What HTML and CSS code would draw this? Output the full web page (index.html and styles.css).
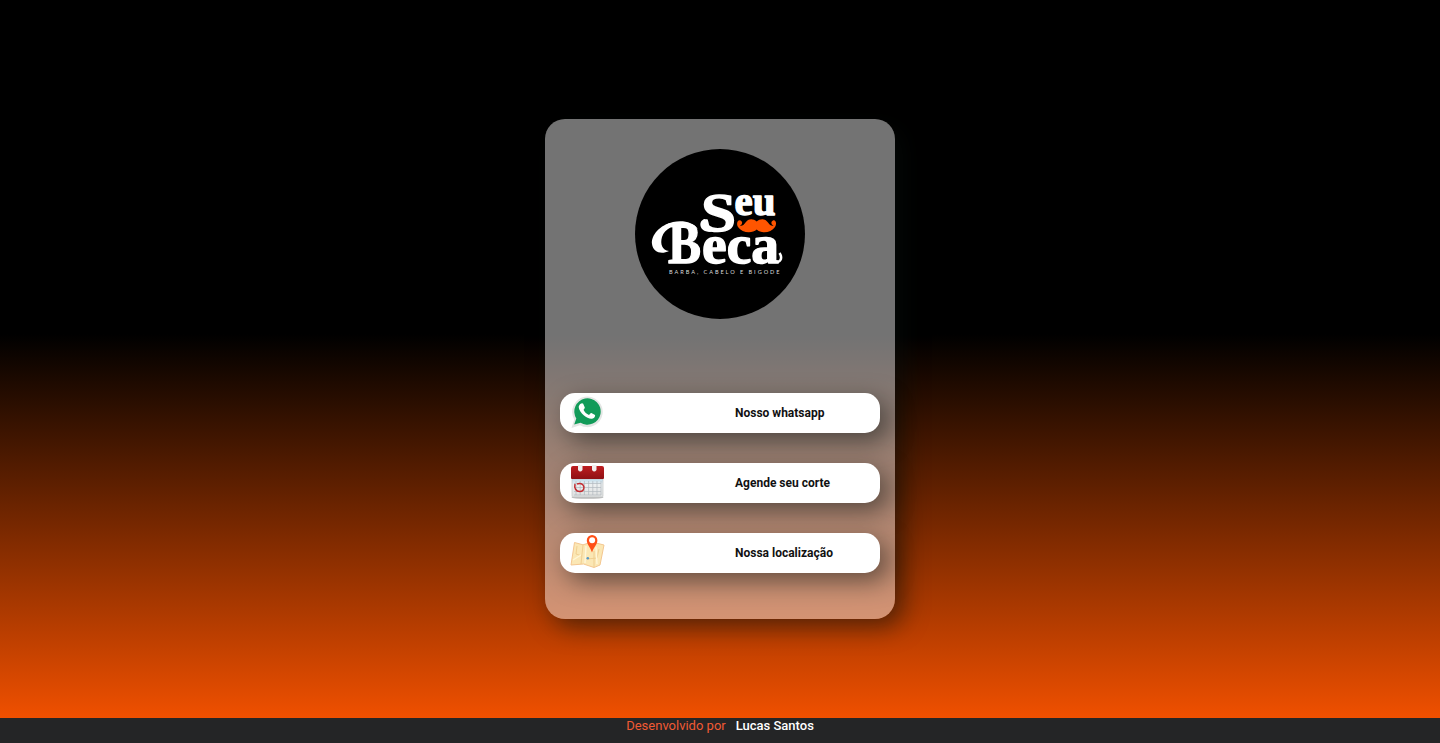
FILE: index.html
```html
<!DOCTYPE html>
<html lang="pt-BR">
<head>
<meta charset="utf-8">
<title>Seu Beca</title>
<link rel="stylesheet" href="styles.css">
</head>
<body>
<main class="page">
  <section class="card">
    <svg class="logo" viewBox="0 0 170 170" role="img" aria-label="Seu Beca">
      <circle cx="85" cy="85" r="85" fill="#000"/>
      <g class="logo-name">
        <text x="66" y="81.500" font-size="54" textLength="35" lengthAdjust="spacingAndGlyphs">S</text>
        <text x="99.500" y="65.500" font-size="43" textLength="41" lengthAdjust="spacingAndGlyphs">eu</text>
        <text x="33" y="113.500" font-size="60" textLength="33" lengthAdjust="spacingAndGlyphs">B</text>
        <text x="67" y="113.500" font-size="54" textLength="77" lengthAdjust="spacingAndGlyphs">eca</text>
      </g>
      <path fill="#fff" d="M63 80C58 73 48 71 38 73C25 76 16 86 17 95C18 103 26 106 34 102C27 101 25 95 27 88C30 79 41 75 51 76C56 76.500 60 78 63 80Z"/>
      <path fill="#fff" d="M70 70C65 71 64 76 67 80C69 82 72 83 76 83L74 79C71 77 70 74 70 70Z"/>
      <path d="M140 112C145 115 148 109 144.500 104" fill="none" stroke="#fff" stroke-width="2.500"/>
      <path fill="#ff5500" d="M121.700 72.500C118 69 113 69.500 110.500 73.500C109 76 106.500 77.500 105 76.500C107.500 76 108 72.500 105.500 71.500C102.500 70.500 101 75 103 78C107 84 117 85 121.700 80.500C126.500 85 136 84 140 78C142 75 141 70.500 138 71.500C135.500 72.500 136 76 138.500 76.500C137 77.500 134.500 76 133 73.500C130.500 69.500 125.500 69 121.700 72.500Z"/>
      <text class="logo-tag" x="34" y="125.200" textLength="110.500">BARBA, CABELO E BIGODE</text>
    </svg>
    <nav class="links">
      <a class="link">
        <svg class="icon" viewBox="0 0 35 35">
          <path fill="#e3e6e4" d="M1.500 34L4.200 25.500A15.300 15.300 0 1 1 10 31.200Z"/>
          <path fill="#129b59" d="M4.200 30.500L6.300 24.500A13.200 13.200 0 1 1 10.500 28.700Z"/>
          <path fill="#fff" d="M10.700 9.700C11.600 8.900 12.800 9 13.200 9.800L14.800 13.400C15 14.200 13.500 15.400 13.600 15.900C14.700 18.200 16.500 19.900 19 20.900C19.700 20.700 20.600 18.800 21.400 19.100L25 21C25.500 21.900 24.500 24 22.700 24.600C20.500 25.500 16.500 23.800 14 21.500C11 18.900 8.700 15.500 8.700 13C8.800 11.600 9.700 10.400 10.700 9.700Z"/>
        </svg>
        <span class="label">Nosso whatsapp</span>
      </a>
      <a class="link">
        <svg class="icon" viewBox="0 0 35 35">
          <defs>
            <linearGradient id="red" x2="0" y2="1"><stop stop-color="#bd1d20"/><stop offset="1" stop-color="#8f1014"/></linearGradient>
            <linearGradient id="paper" x2="0" y2="1"><stop stop-color="#bfdcec"/><stop offset=".3" stop-color="#edf0f1"/><stop offset="1" stop-color="#dedfdf"/></linearGradient>
          </defs>
          <ellipse cx="17.500" cy="33.500" rx="16" ry="1.300" fill="#b9b9b9"/>
          <path fill="url(#paper)" stroke="#c2c5c6" stroke-width=".7" d="M2 15H33V32Q33 33 32 33H3Q2 33 2 32Z"/>
          <path fill="none" stroke="#b2b9bf" stroke-width=".7" d="M4 19.500H31M4 23.500H31M4 27.500H31M4 31H31M6 17V31M10.200 17V31M14.400 17V31M18.600 17V31M22.800 17V31M27 17V31M31 17V31"/>
          <path fill="url(#red)" d="M1 4Q1 2 3 2H32Q34 2 34 4V14Q34 15 33 15H2Q1 15 1 14Z"/>
          <path fill="#f1eeee" d="M8 1H12.500V6Q10.200 9 8 6ZM22 1H26.500V6Q24.200 9 22 6Z"/>
          <path fill="none" stroke="#c32b31" stroke-width="1.500" d="M5 20C4 24 6 27.500 9.500 27.500C13 27.500 14.500 25 13.800 22.500C13 19.800 10 18.800 7 20"/>
        </svg>
        <span class="label">Agende seu corte</span>
      </a>
      <a class="link">
        <svg class="icon" viewBox="0 0 35 35">
          <path fill="#fbe7b4" stroke="#f4c790" stroke-linejoin="round" d="M4.500 8.500L13 10.800L22 8L34 11L30 31L24 33.500L13.500 30L1 31Z"/>
          <path fill="none" stroke="#edc989" stroke-width=".8" d="M13 11L11 30M24 17V33M7 12L6 20L12 22M29 15L27 24L17 25"/>
          <path fill="none" stroke="#fff6d8" stroke-width="1.400" d="M16 12L15 29M26 13L27 30M3 26L11 21"/>
          <circle cx="17.800" cy="24.200" r="1.300" fill="#5798c6"/>
          <path fill="#ff4f16" d="M22 18.500C20.500 13.500 16.800 10.500 16.800 6.300A5.300 5.300 0 0 1 27.400 6.300C27.400 10.500 23.500 13.500 22 18.500Z"/>
          <circle cx="22.100" cy="6.300" r="3" fill="#fff"/>
        </svg>
        <span class="label">Nossa localização</span>
      </a>
    </nav>
  </section>
</main>
<footer class="footer"><span>Desenvolvido por</span><a class="author">Lucas Santos</a></footer>
</body>
</html>
```
FILE: styles.css
```css
* { box-sizing: border-box; }
body {
  display: flex;
  flex-direction: column;
  height: 743px;
  margin: 0;
  overflow: hidden;
  font-family: Roboto, sans-serif;
  background: linear-gradient(to bottom, #000 45%, #ff5500 100%);
}
.page {
  display: flex;
  justify-content: center;
  height: 718px;
  padding-top: 119px;
}
.card {
  display: flex;
  flex-direction: column;
  align-items: center;
  gap: 74px;
  width: 350px;
  height: 500px;
  padding: 30px 15px;
  border-radius: 20px;
  background: rgba(255, 255, 255, .45);
  box-shadow: 8px 8px 25px rgba(8, 14, 11, .55);
}
.logo { display: block; flex: none; width: 170px; height: 170px; }
.logo-name {
  font-family: "Liberation Serif", serif;
  font-weight: 700;
  fill: #fff;
  stroke: #fff;
  stroke-width: 1.4px;
  stroke-linejoin: round;
}
.logo-tag { font-family: Lato, sans-serif; font-size: 5.6px; fill: #ddd; }
.links { display: flex; flex-direction: column; gap: 30px; width: 100%; }
.link {
  display: grid;
  grid-template-columns: 165px 1fr;
  align-items: center;
  height: 40px;
  padding: 0 10px;
  border-radius: 15px;
  background: #fff;
  box-shadow: 8px 8px 25px rgba(8, 14, 11, .5);
}
.icon { display: block; width: 35px; height: 35px; margin-bottom: 4px; }
.label { color: #111; font-size: 12px; font-weight: 700; }
.footer {
  display: flex;
  justify-content: center;
  gap: 10px;
  height: 25px;
  background: #242526;
  color: #f05a34;
  font-size: 13px;
  line-height: 16px;
}
.author { color: #fff; font-weight: 500; }
```
